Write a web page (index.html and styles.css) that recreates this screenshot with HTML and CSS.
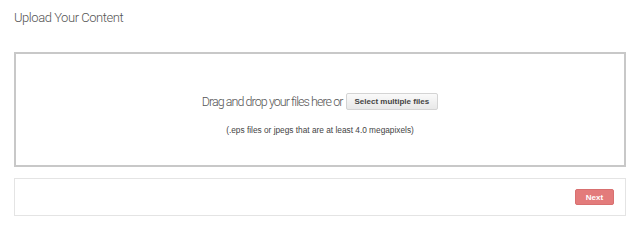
FILE: index.html
```html
<!DOCTYPE html>
<html lang="en">
<head>
    <meta charset="UTF-8">
    <title>Upload Your Content</title>
    <link rel="stylesheet" href="styles.css">
</head>
<body>
    <div class="upload">
        <h2 class="upload-title">Upload Your Content</h2>
        <div class="dropzone">
            <div class="dropzone-line">
                <span class="dropzone-text">Drag and drop your files here or</span>
                <button class="select-btn">Select multiple files</button>
            </div>
            <p class="dropzone-hint">(.eps files or jpegs that are at least 4.0 megapixels)</p>
        </div>
        <div class="actions">
            <button class="next-btn">Next</button>
        </div>
    </div>
</body>
</html>
```

FILE: styles.css
```css
* {
    margin: 0;
    padding: 0;
    box-sizing: border-box;
}

body {
    font-family: "Liberation Sans", Arial, sans-serif;
    background: #fff;
    color: #555;
}

.upload {
    padding: 10px 14px;
}

.upload-title {
    font-family: Roboto, "Liberation Sans", sans-serif;
    font-size: 13px;
    font-weight: 300;
    color: #555;
    height: 42px;
    line-height: 16px;
    letter-spacing: -0.45px;
}

.dropzone {
    height: 115px;
    border: 2px solid #c8c8c8;
    display: flex;
    flex-direction: column;
    align-items: center;
    justify-content: center;
    padding-top: 8px;
}

.dropzone-line {
    display: flex;
    align-items: center;
    gap: 3px;
}

.dropzone-text {
    font-family: Roboto, "Liberation Sans", sans-serif;
    font-size: 12.5px;
    font-weight: 300;
    color: #555;
    letter-spacing: -0.95px;
}

.select-btn {
    font-family: "Liberation Sans", Arial, sans-serif;
    font-size: 8px;
    font-weight: bold;
    color: #444;
    height: 17px;
    padding: 0 8px;
    border: 1px solid #d4d4d4;
    border-radius: 2px;
    background: linear-gradient(#fafafa, #e8e8e8);
}

.dropzone-hint {
    font-size: 8.3px;
    color: #444;
    margin-top: 15px;
}

.actions {
    margin-top: 11px;
    height: 38px;
    border: 1px solid #e4e4e4;
    display: flex;
    justify-content: flex-end;
    align-items: center;
    padding-right: 11px;
}

.next-btn {
    font-family: "Liberation Sans", Arial, sans-serif;
    font-size: 8px;
    font-weight: bold;
    color: #fff;
    width: 39px;
    height: 16px;
    border: 1px solid #d87070;
    border-radius: 2px;
    background: #e37b7b;
}
```
